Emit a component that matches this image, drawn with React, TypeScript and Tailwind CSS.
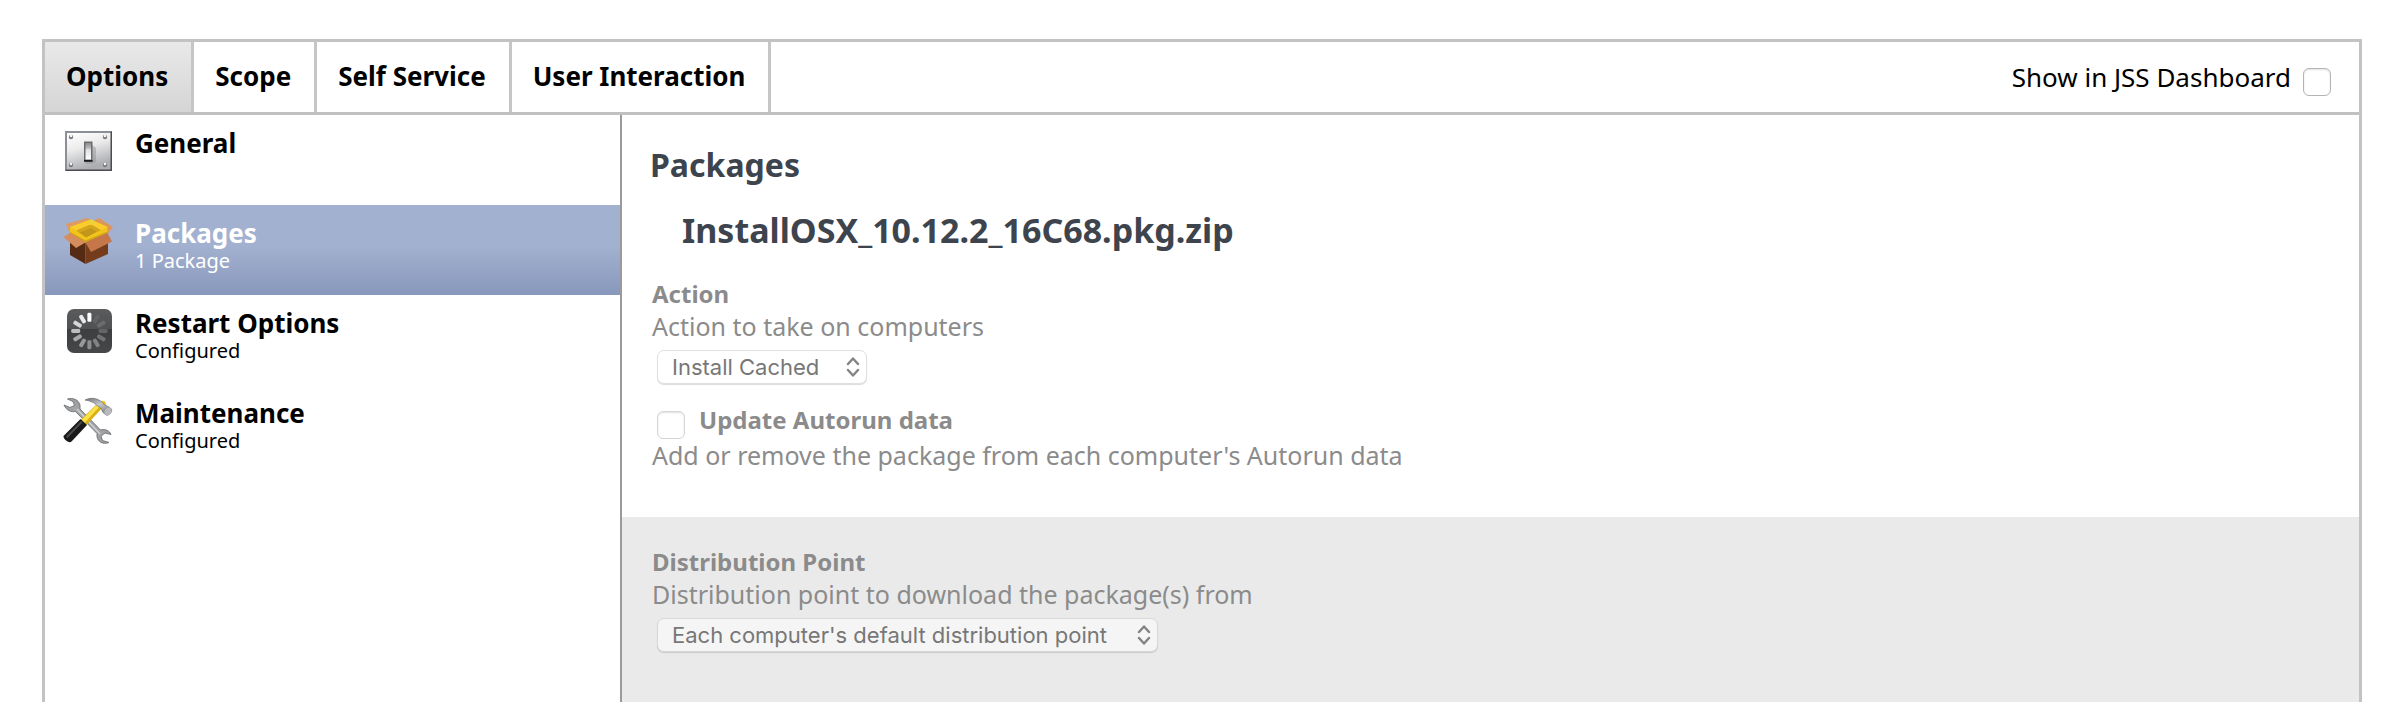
import type { ReactNode } from "react";

const tabs = ["Options", "Scope", "Self Service", "User Interaction"];

function SwitchIcon() {
  return (
    <svg viewBox="0 0 50 50" className="size-[50px] shrink-0" aria-hidden="true">
      <defs>
        <linearGradient id="plate" x1="0" y1="0" x2="0.35" y2="1">
          <stop offset="0" stopColor="#ffffff" />
          <stop offset="0.45" stopColor="#ececec" />
          <stop offset="1" stopColor="#adaeb2" />
        </linearGradient>
        <linearGradient id="lever" x1="0" y1="0" x2="0" y2="1">
          <stop offset="0" stopColor="#8b8c90" />
          <stop offset="0.35" stopColor="#c4c4c6" />
          <stop offset="0.4" stopColor="#e0e0e0" />
          <stop offset="1" stopColor="#ffffff" />
        </linearGradient>
      </defs>
      <rect x="2" y="4" width="47" height="40" fill="#8c9095" />
      <path d="M2 44 4 42H47V6L49 4V44Z" fill="#4b4c50" />
      <rect x="4" y="6" width="43.500" height="36.500" fill="url(#plate)" />
      {[[8, 9], [42, 9], [8, 37], [42, 37]].map(([x, y]) => (
        <g key={`${x}-${y}`}>
          <circle cx={x} cy={y + 1} r="2.200" fill="#77787c" />
          <circle cx={x} cy={y} r="1.300" fill="#f4f4f4" />
        </g>
      ))}
      <path d="M29 18 33 21V35L29 37H22Z" fill="#8a8b90" opacity="0.45" />
      <rect x="21" y="14.500" width="8.500" height="20" fill="#6b6c70" />
      <rect x="22.500" y="16" width="5.500" height="16.500" fill="url(#lever)" />
      <rect x="21" y="33" width="8.500" height="1.800" fill="#1c1c1e" />
    </svg>
  );
}

function BoxIcon() {
  return (
    <svg viewBox="0 0 50 50" className="size-[50px] shrink-0" aria-hidden="true">
      <path d="M7 20 22.500 22V47L7 38Z" fill="#552b13" />
      <path d="M22.500 22 45 18V37L22.500 47Z" fill="#743c1a" />
      <path d="M3 7 24 1 29 4 7 17Z" fill="#dd9a61" />
      <path d="M31 3 36 1 50 10 43 19Z" fill="#dd965a" />
      <path d="M7 10 28 2.500 44.500 10V16L22.500 25.500 7 16Z" fill="#f2c31b" />
      <path d="M7 10 28 2.500 44.500 10 37 13.500 28 8 13.500 13.500Z" fill="#fbcd2c" />
      <path d="M13.500 13.500 28 7.500 37.500 13 23 20.500Z" fill="#c2951b" />
      <path d="M28 7.500 37.500 13 34 15 28 11 17 15.500 13.500 13.500Z" fill="#d3a61c" />
      <path d="M7 15 22.500 23.500 44.500 14.500V16L22.500 26 7 16.500Z" fill="#cda21a" />
      <path d="M26 3.500 28 2.500 31 3.800 29 8H27.500Z" fill="#e8d53c" />
      <path d="M7 16 22.500 25.500 13 31 0.500 20Z" fill="#d58c5f" />
      <path d="M22.500 25.500 44.500 16 49 24.500 28 35Z" fill="#c5774a" />
    </svg>
  );
}

function SpinnerIcon() {
  const shades = [1, 0.08, 0.14, 0.2, 0.26, 0.34, 0.4, 0.46, 0.54, 0.66, 0.76, 0.88];
  return (
    <svg viewBox="0 0 50 50" className="size-[50px] shrink-0" aria-hidden="true">
      <defs>
        <linearGradient id="tile" x1="0" y1="0" x2="0" y2="1">
          <stop offset="0" stopColor="#5a5b5d" />
          <stop offset="0.45" stopColor="#505153" />
          <stop offset="0.46" stopColor="#3d3e40" />
          <stop offset="1" stopColor="#464749" />
        </linearGradient>
      </defs>
      <rect x="4" y="2" width="45" height="44" rx="7" fill="url(#tile)" />
      {shades.map((o, i) => (
        <rect key={i} x="24.400" y="5.800" width="4" height="9" rx="1.400" fill="#fff" opacity={o} transform={`rotate(${i * 30} 26.400 24)`} />
      ))}
    </svg>
  );
}

function ToolsIcon() {
  return (
    <svg viewBox="0 0 50 50" className="size-[50px] shrink-0" aria-hidden="true">
      <defs>
        <linearGradient id="steel" x1="0" y1="1" x2="1" y2="0">
          <stop offset="0" stopColor="#77797c" />
          <stop offset="0.5" stopColor="#a4a6a8" />
          <stop offset="1" stopColor="#77797c" />
        </linearGradient>
        <linearGradient id="head" x1="0" y1="0" x2="0.6" y2="1">
          <stop offset="0" stopColor="#6f7276" />
          <stop offset="0.5" stopColor="#c6c8ca" />
          <stop offset="1" stopColor="#7d8083" />
        </linearGradient>
      </defs>
      <path
        d="M4.500 2C10 0.500 15.500 2.500 17 8L17 12 37.500 33C42 31.500 47 34 48 37.500L42 36 38 39 39.500 43.500 46 45.500C40 48 34.500 44.500 34 39.500L34 36.500 12.500 14.500C8 15.500 3 13 1 8L7 10.500 11.500 8.500 10 4.500Z"
        fill="url(#steel)"
        stroke="#6f7174"
        strokeWidth="0.900"
      />
      <path d="M14 12 37 37" stroke="#cfd1d2" strokeWidth="1.400" />
      <path d="M37 4 41 9 23.500 28 18 22.500Z" fill="#d9b113" />
      <path d="M37 4.500 39 7 21.500 26 18.500 23Z" fill="#fbe04a" />
      <path d="M38.500 3.500 42 4.500 43.500 8 40 9Z" fill="#e8c31c" />
      <path d="M17.500 22 24 28 8.500 44.500C6 47 0 42 0.500 39Z" fill="#19191a" />
      <path d="M18 24 19.500 25.500 4.500 41 3 39.500Z" fill="#4a4a4c" />
      <path
        d="M22 3C29-0.500 37 1.500 41.500 8L45 9.500 48.500 12C49.500 15 46 19 43 18L39.500 15C39 12 37 10 34.500 9 31 5 27 4 22 3Z"
        fill="url(#head)"
        stroke="#77797c"
        strokeWidth="0.800"
      />
      <ellipse cx="45" cy="14.500" rx="3.200" ry="4" fill="#b7b9bb" transform="rotate(38 45 14.500)" />
    </svg>
  );
}

const sections: { name: string; status?: string; icon: ReactNode; active?: boolean }[] = [
  { name: "General", icon: <SwitchIcon /> },
  { name: "Packages", status: "1 Package", icon: <BoxIcon />, active: true },
  { name: "Restart Options", status: "Configured", icon: <SpinnerIcon /> },
  { name: "Maintenance", status: "Configured", icon: <ToolsIcon /> },
];

const checkbox =
  "size-7 shrink-0 appearance-none rounded-md border bg-white shadow-[inset_0_1px_2px_rgba(0,0,0,0.12)]";

function Picker({ id, value, className }: { id: string; value: string; className: string }) {
  return (
    <div className="relative mt-2 ml-[5px] w-fit">
      <select
        id={id}
        disabled
        className={`block h-[34px] appearance-none rounded-[7px] border pl-3.5 font-[Inter,sans-serif] text-[22px] leading-8 text-[#777777] opacity-100 shadow-[0_1px_1px_rgba(0,0,0,0.14)] ${className}`}
      >
        <option>{value}</option>
      </select>
      <svg viewBox="0 0 14 20" className="pointer-events-none absolute top-[7px] right-[7px] h-5 w-3.5" fill="none" stroke="#838383" strokeWidth="2.400" strokeLinecap="round" strokeLinejoin="round" aria-hidden="true">
        <path d="M2 7 7 1.500 12 7M2 13 7 18.500 12 13" />
      </svg>
    </div>
  );
}

export default function App() {
  return (
    <div className="flex min-h-screen flex-col bg-white pt-[39px] pr-[29px] pl-[42px] font-['Noto_Sans',sans-serif] text-black">
      <div className="flex grow flex-col border-x-[3px] border-t-[3px] border-[#c3c3c3]">
        <header className="flex h-[73px] justify-between border-b-[3px] border-[#c1c1c1]">
          <nav className="flex">
            {tabs.map((t, i) => (
              <button
                key={t}
                type="button"
                className={`border-r-[3px] border-[#c6c6c6] pr-[23px] pl-[21px] pb-0.5 text-[26px] font-bold ${i === 0 ? "bg-linear-to-b from-[#e9e9e9] to-[#d5d5d5]" : "bg-white"}`}
              >
                {t}
              </button>
            ))}
          </nav>
          <div className="flex items-center gap-3 pr-7">
            <label htmlFor="dashboard" className="text-[26px]">
              Show in JSS Dashboard
            </label>
            <input id="dashboard" type="checkbox" className={`${checkbox} mt-[9px] border-[#b4b4b4]`} />
          </div>
        </header>

        <div className="flex grow">
          <aside className="w-[577px] shrink-0 border-r-2 border-[#9a9a9a]">
            {sections.map((s) => (
              <a
                key={s.name}
                href="#"
                className={`flex h-[90px] gap-[22px] pt-3 pl-[18px] ${s.active ? "bg-linear-to-b from-[#a3b1d0] from-45% to-[#8898bc] text-white" : ""}`}
              >
                {s.icon}
                <span className="flex flex-col">
                  <span className="text-[26px] leading-8 font-bold">{s.name}</span>
                  {s.status && <span className="text-xl leading-6">{s.status}</span>}
                </span>
              </a>
            ))}
          </aside>

          <main className="flex grow flex-col text-[#8b8b8b]">
            <section className="pt-[30px] pb-[46px] pl-[30px]">
              <h1 className="-ml-0.5 text-[32px] leading-10 font-bold text-[#3d444d]">Packages</h1>
              <h2 className="mt-[25px] ml-[30px] text-[34px] leading-10 font-bold text-[#3d444d]">InstallOSX_10.12.2_16C68.pkg.zip</h2>
              <label htmlFor="action" className="mt-7 block text-2xl leading-8 font-bold">
                Action
              </label>
              <p className="text-[25px] leading-8">Action to take on computers</p>
              <Picker id="action" value="Install Cached" className="w-[210px] border-[#e0e0e0] bg-white" />
              <div className="mt-5 ml-[5px] flex h-[35px] gap-3.5">
                <input id="autorun" type="checkbox" disabled className={`${checkbox} self-end border-[#d6d6d6]`} />
                <label htmlFor="autorun" className="text-2xl leading-8 font-bold">
                  Update Autorun data
                </label>
              </div>
              <p className="text-[25px] leading-8">Add or remove the package from each computer's Autorun data</p>
            </section>

            <section className="grow bg-[#eaeaea] pt-[29px] pb-[50px] pl-[30px]">
              <label htmlFor="point" className="block text-2xl leading-8 font-bold">
                Distribution Point
              </label>
              <p className="text-[25px] leading-8">Distribution point to download the package(s) from</p>
              <Picker id="point" value="Each computer's default distribution point" className="w-[501px] border-[#d8d8d8] bg-[#f5f5f5]" />
            </section>
          </main>
        </div>
      </div>
    </div>
  );
}
